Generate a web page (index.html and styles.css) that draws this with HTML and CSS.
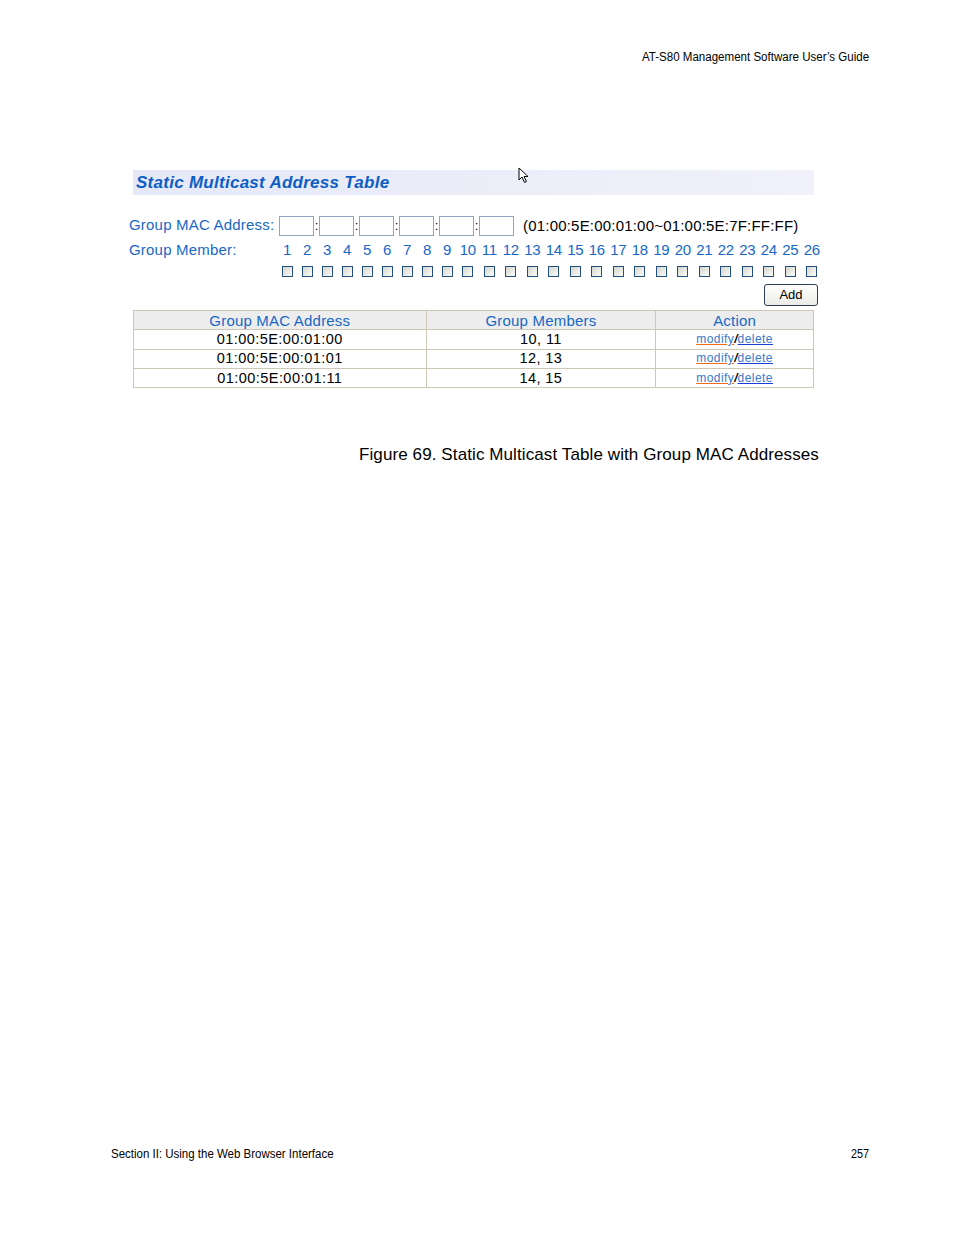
FILE: index.html
```html
<!DOCTYPE html>
<html>
<head>
<meta charset="utf-8">
<link rel="stylesheet" href="styles.css">
</head>
<body>
<div class="page">
  <header class="running-head">AT-S80 Management Software User’s Guide</header>

  <section class="figure">
    <div class="title-bar">
      <span class="title">Static Multicast Address Table</span>
      <svg class="cursor" width="12" height="18" viewBox="0 0 12 18">
        <path d="M1 1 L1 13 L4 10 L6.5 15.5 L8.5 14.5 L6 9.5 L10 9.5 Z" fill="#fff" stroke="#000" stroke-width="1" stroke-linejoin="miter"/>
      </svg>
    </div>

    <div class="form">
      <div class="mac-row">
        <span class="label mac-label">Group MAC Address:</span>
        <span class="mac-inputs">
          <span class="box"></span><span class="colon">:</span>
          <span class="box"></span><span class="colon">:</span>
          <span class="box"></span><span class="colon">:</span>
          <span class="box"></span><span class="colon">:</span>
          <span class="box"></span><span class="colon">:</span>
          <span class="box"></span>
        </span>
        <span class="range">(01:00:5E:00:01:00~01:00:5E:7F:FF:FF)</span>
      </div>

      <div class="member-row">
        <span class="label member-label">Group Member:</span>
        <div class="ports">
          <span class="n s">1</span><span class="n s">2</span><span class="n s">3</span><span class="n s">4</span><span class="n s">5</span><span class="n s">6</span><span class="n s">7</span><span class="n s">8</span><span class="n s">9</span><span class="n">10</span><span class="n">11</span><span class="n">12</span><span class="n">13</span><span class="n">14</span><span class="n">15</span><span class="n">16</span><span class="n">17</span><span class="n">18</span><span class="n">19</span><span class="n">20</span><span class="n">21</span><span class="n">22</span><span class="n">23</span><span class="n">24</span><span class="n">25</span><span class="n">26</span>
          <span class="c s"><i></i></span><span class="c s"><i></i></span><span class="c s"><i></i></span><span class="c s"><i></i></span><span class="c s"><i></i></span><span class="c s"><i></i></span><span class="c s"><i></i></span><span class="c s"><i></i></span><span class="c s"><i></i></span><span class="c"><i></i></span><span class="c"><i></i></span><span class="c"><i></i></span><span class="c"><i></i></span><span class="c"><i></i></span><span class="c"><i></i></span><span class="c"><i></i></span><span class="c"><i></i></span><span class="c"><i></i></span><span class="c"><i></i></span><span class="c"><i></i></span><span class="c"><i></i></span><span class="c"><i></i></span><span class="c"><i></i></span><span class="c"><i></i></span><span class="c"><i></i></span><span class="c"><i></i></span>
        </div>
      </div>

      <div class="add-row"><span class="add-btn">Add</span></div>
    </div>

    <table class="mtable">
      <thead>
        <tr><th class="col1">Group MAC Address</th><th class="col2">Group Members</th><th class="col3">Action</th></tr>
      </thead>
      <tbody>
        <tr><td>01:00:5E:00:01:00</td><td>10, 11</td><td class="act"><a class="mod">modify</a><b>/</b><a class="del">delete</a></td></tr>
        <tr><td>01:00:5E:00:01:01</td><td>12, 13</td><td class="act"><a class="mod">modify</a><b>/</b><a class="del">delete</a></td></tr>
        <tr><td>01:00:5E:00:01:11</td><td>14, 15</td><td class="act"><a class="mod">modify</a><b>/</b><a class="del">delete</a></td></tr>
      </tbody>
    </table>

    <p class="caption">Figure 69. Static Multicast Table with Group MAC Addresses</p>
  </section>

  <footer class="running-foot">
    <span>Section II: Using the Web Browser Interface</span>
    <span>257</span>
  </footer>
</div>
</body>
</html>
```

FILE: styles.css
```css
* { box-sizing: border-box; }
html, body { margin: 0; padding: 0; background: #fff; }
body { font-family: "Liberation Sans", Arial, sans-serif; color: #000; }

.page {
  width: 954px;
  height: 1235px;
  display: flex;
  flex-direction: column;
}

.running-head {
  margin: 49px 85px 0 0;
  align-self: flex-end;
  font-size: 12px;
  line-height: 16px;
  transform: scaleX(0.962);
  transform-origin: right center;
  white-space: nowrap;
}

.figure {
  margin-top: 105px;
  padding-left: 129px;
  width: 954px;
}

.title-bar {
  position: relative;
  margin-left: 4px;
  width: 681px;
  height: 25px;
  background: linear-gradient(to right, #e5e8f7, #f0f1fa);
  padding-left: 3px;
}
.title {
  font-weight: bold;
  font-style: italic;
  font-size: 17px;
  line-height: 25px;
  color: #0d5ec4;
  letter-spacing: 0.27px;
}
.cursor {
  position: absolute;
  left: 385px;
  top: -3px;
}

.form { margin-top: 21px; }
.label { color: #1868c6; font-size: 15px; letter-spacing: 0.2px; }

.mac-row {
  display: flex;
  align-items: flex-start;
  height: 20px;
}
.mac-label { width: 150px; line-height: 18px; }
.mac-inputs { display: flex; align-items: center; }
.box {
  display: block;
  width: 35px;
  height: 20px;
  border: 1px solid #8fa6c2;
  background: #fff;
}
.colon { width: 5px; font-size: 13px; text-align: center; line-height: 20px; }
.range { margin-left: 9px; font-size: 15px; line-height: 20px; letter-spacing: 0.2px; }

.member-row {
  display: flex;
  margin-top: 4px;
}
.member-label { width: 148px; line-height: 20px; }
.ports {
  display: grid;
  grid-template-columns: repeat(9, 20px) repeat(17, 21.5px);
  grid-template-rows: 20px 20px;
}
.n {
  color: #1868c6;
  font-size: 15px;
  line-height: 20px;
  text-align: center;
  letter-spacing: -0.3px;
}
.c { display: flex; justify-content: center; align-items: center; padding-top: 2px; }
.c i {
  display: block;
  width: 11px;
  height: 11px;
  border: 1px solid #22507e;
  background: linear-gradient(135deg, #d6d6cf, #fbfbf8);
}

.add-row {
  display: flex;
  justify-content: flex-end;
  width: 689px;
  margin-top: 4px;
}
.add-btn {
  display: block;
  width: 54px;
  height: 22px;
  border: 1px solid #2d3e55;
  border-radius: 3px;
  background: linear-gradient(#ffffff, #ecebe6);
  font-size: 13px;
  line-height: 20px;
  text-align: center;
}

.mtable {
  margin-left: 4px;
  margin-top: 4px;
  width: 681px;
  border-collapse: collapse;
  border: 1px solid #d6d0c0;
  font-size: 14.5px;
}
.mtable th, .mtable td {
  border: 1px solid #cdc7b6;
  height: 19.3px;
  padding: 0;
  text-align: center;
  line-height: 17px;
}
.mtable th {
  background: #ededed;
  font-weight: normal;
  font-size: 15px;
  letter-spacing: 0.2px;
  color: #1868c6;
}
.col1 { width: 293px; }
.col2 { width: 230px; }
.col3 { width: 158px; }
.mtable td { letter-spacing: 0.45px; }
.act { font-size: 12px; }
.mtable td.act { letter-spacing: 0.45px; }
.act a { color: #3b78c9; text-decoration: underline; }
.act a.mod { text-decoration-color: #ee6a1a; }
.act a.del { text-decoration-color: #1a3fd6; }
.act b { font-weight: bold; font-style: italic; letter-spacing: 0; }

.caption {
  margin: 57px 0 0 230px;
  font-size: 17px;
  line-height: 20px;
  letter-spacing: 0.1px;
}

.running-foot {
  margin-top: auto;
  margin-bottom: 73px;
  margin-left: 111px;
  width: 758px;
  display: flex;
  justify-content: space-between;
  font-size: 12px;
  line-height: 16px;
}
.running-foot span:first-child { transform: scaleX(0.957); transform-origin: left center; white-space: nowrap; }
.running-foot span:last-child { transform: scaleX(0.9); transform-origin: right center; }
```
